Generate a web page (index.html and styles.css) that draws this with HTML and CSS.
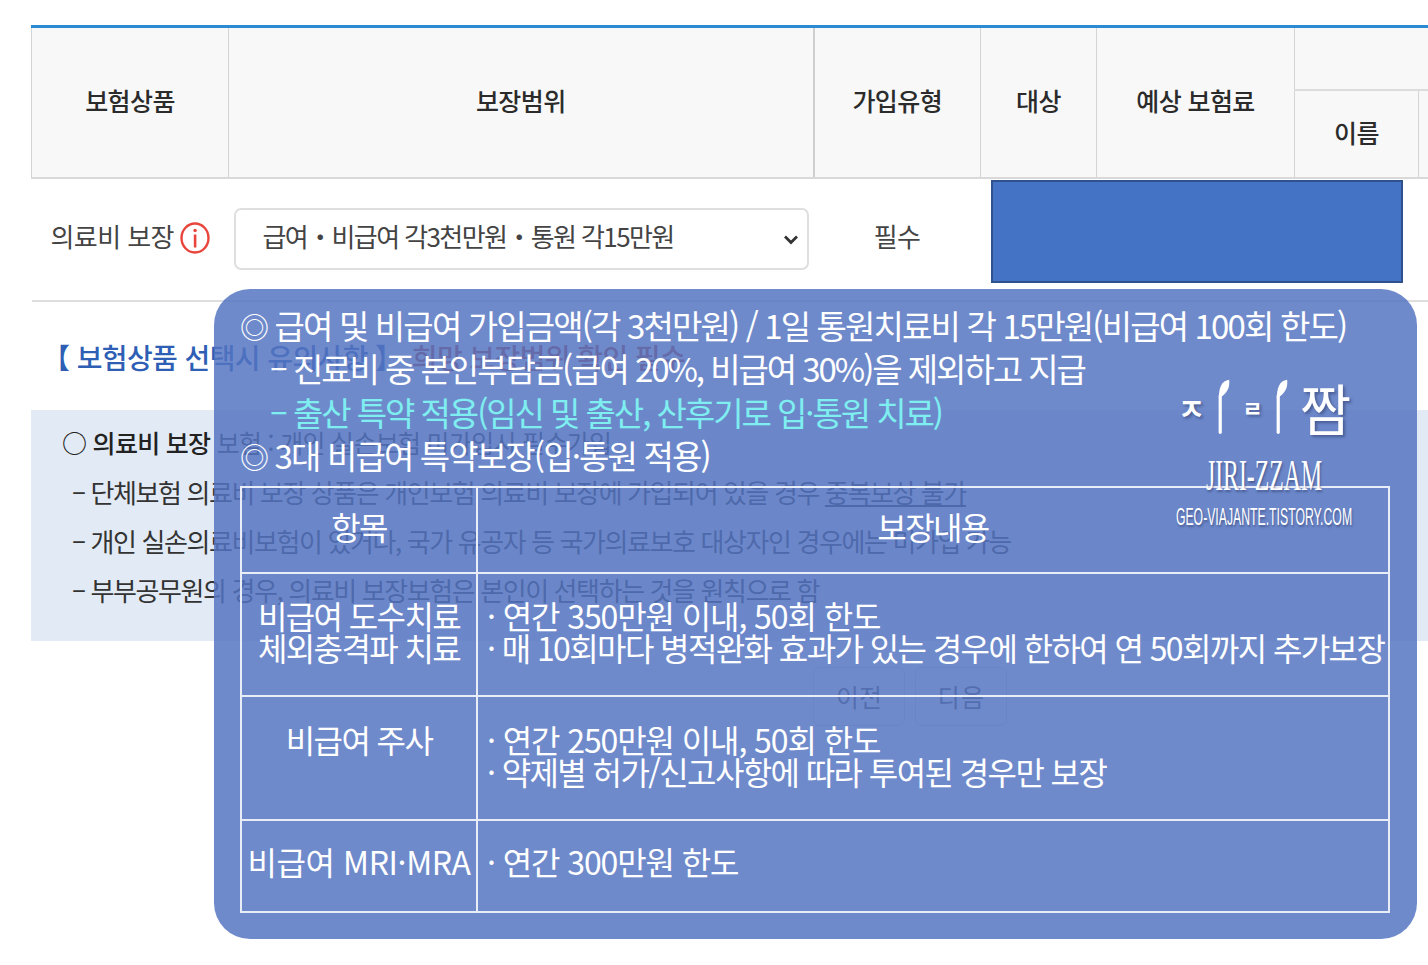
FILE: index.html
```html
<!DOCTYPE html>
<html lang="ko">
<head>
<meta charset="utf-8">
<title>의료비 보장</title>
<link rel="stylesheet" href="styles.css">
</head>
<body>
<main class="page">
  <table class="plan">
    <colgroup>
      <col class="c1"><col class="c2"><col class="c3"><col class="c4"><col class="c5"><col class="c6"><col class="c7">
    </colgroup>
    <thead>
      <tr class="head-top">
        <th rowspan="2">보험상품</th>
        <th rowspan="2" class="thick">보장범위</th>
        <th rowspan="2">가입유형</th>
        <th rowspan="2">대상</th>
        <th rowspan="2">예상 보험료</th>
        <th colspan="2"></th>
      </tr>
      <tr class="head-sub">
        <th>이름</th>
        <th></th>
      </tr>
    </thead>
    <tbody>
      <tr class="row">
        <td class="name">의료비 보장 <svg class="info" viewBox="0 0 30 32" aria-hidden="true"><ellipse cx="15" cy="16" rx="13.5" ry="14.5" fill="none" stroke="#e8453c" stroke-width="2.4"/><rect x="13.8" y="12.5" width="2.6" height="13" fill="#e8453c"/><circle cx="15.1" cy="8.5" r="1.7" fill="#e8453c"/></svg></td>
        <td class="range">
          <div class="choice-wrap">
            <select class="choice"><option>급여・비급여 각3천만원・통원 각15만원</option></select>
            <svg class="chev" viewBox="0 0 16 11" aria-hidden="true"><path d="M2 2.5 8 8.5 14 2.5" fill="none" stroke="#333" stroke-width="2.8"/></svg>
          </div>
        </td>
        <td class="type">필수</td>
        <td colspan="4"><div class="hidden-field"></div></td>
      </tr>
    </tbody>
  </table>

  <section class="notice">
    <h2 class="notice-title"><span class="blue">【 보험상품 선택시 유의사항 】</span> <span class="red">희망 보장범위 확인 필수</span></h2>
    <div class="notice-box">
      <p class="lead"><b>○ 의료비 보장</b> 보험 : 개인 실손보험 미가입시 필수가입</p>
      <p>– 단체보험 의료비 보장 상품은 개인보험 의료비 보장에 가입되어 있을 경우 <u>중복보상 불가</u></p>
      <p>– 개인 실손의료비보험이 있거나, 국가 유공자 등 국가의료보호 대상자인 경우에는 미가입 가능</p>
      <p>– 부부공무원의 경우, 의료비 보장보험은 본인이 선택하는 것을 원칙으로 함</p>
    </div>
    <div class="pager">
      <button class="btn">이전</button>
      <button class="btn">다음</button>
    </div>
  </section>
</main>

<div class="redact"></div>

<aside class="overlay">
  <p class="ov-line"><span class="ring">◎</span> 급여 및 비급여 가입금액(각 3천만원) / 1일 통원치료비 각 15만원(비급여 100회 한도)</p>
  <p class="ov-line sub">– 진료비 중 본인부담금(급여 20%, 비급여 30%)을 제외하고 지급</p>
  <p class="ov-line sub cyan">– 출산 특약 적용(임신 및 출산, 산후기로 입·통원 치료)</p>
  <p class="ov-line"><span class="ring">◎</span> 3대 비급여 특약보장(입·통원 적용)</p>
  <table class="detail">
    <tr class="r1"><td class="item">항목</td><td class="center">보장내용</td></tr>
    <tr class="r2"><td class="item">비급여 도수치료<br>체외충격파 치료</td><td><span class="loose">· 연간 350만원 이내, 50회 한도</span><br>· 매 10회마다 병적완화 효과가 있는 경우에 한하여 연 50회까지 추가보장</td></tr>
    <tr class="r3"><td class="item">비급여 주사</td><td><span class="loose">· 연간 250만원 이내, 50회 한도</span><br>· 약제별 허가/신고사항에 따라 투여된 경우만 보장</td></tr>
    <tr class="r4"><td class="item mid wide">비급여 MRI·MRA</td><td class="mid"><span class="loose">· 연간 300만원 한도</span></td></tr>
  </table>
  <div class="logo">
    <div class="logo-mark">
      <span class="jamo small">ㅈ</span>
      <svg class="stalk" viewBox="0 0 16 60" aria-hidden="true"><path d="M3 20C3 10 6 2 14 1C15 9 12 15 5.5 19Z" fill="#fff"/><path d="M4.5 57V18" stroke="#fff" stroke-width="3.4" stroke-linecap="round"/></svg>
      <span class="jamo tiny">ㄹ</span>
      <svg class="stalk" viewBox="0 0 16 60" aria-hidden="true"><path d="M3 20C3 10 6 2 14 1C15 9 12 15 5.5 19Z" fill="#fff"/><path d="M4.5 57V18" stroke="#fff" stroke-width="3.4" stroke-linecap="round"/></svg>
      <span class="jamo big">짬</span>
    </div>
    <div class="logo-name">JIRI-ZZAM</div>
    <div class="logo-url">GEO-VIAJANTE.TISTORY.COM</div>
  </div>
</aside>
</body>
</html>
```

FILE: styles.css
```css
* { box-sizing: border-box; }
html, body { margin: 0; height: 965px; overflow: hidden; background: #fff; }
body {
  position: relative;
  width: 1428px;
  font-family: "Noto Sans CJK KR", "Noto Sans", sans-serif;
  color: #333;
}
.page { padding: 25px 0 0 31px; width: 1428px; overflow: hidden; }

.plan {
  table-layout: fixed;
  width: 1450px;
  border-collapse: collapse;
  border-top: 3px solid #2b8ad0;
}
.c1 { width: 197px; } .c2 { width: 585px; } .c3 { width: 167px; } .c4 { width: 116px; }
.c5 { width: 198px; } .c6 { width: 124px; } .c7 { width: 63px; }
.plan th {
  background: #f8f8f8;
  border: 1px solid #d4d4d4;
  border-top: 0;
  border-bottom: 2px solid #d9d9d9;
  font-size: 25px;
  font-weight: 500;
  color: #2b2b2b;
  letter-spacing: -0.6px;
  padding: 0;
}
.plan th.thick { border-right: 2px solid #cfcfcf; }
.head-top { height: 63px; }
.head-top th[colspan] { border-bottom: 2px solid #dcdcdc; border-right: 0; }
.head-top th[rowspan] { padding-bottom: 5px; }
.head-sub { height: 88px; }
.head-sub th { padding-bottom: 3px; }
.row { height: 123px; }
.plan td { border-bottom: 2px solid #dedede; padding: 0; font-size: 26px; color: #444; letter-spacing: -0.6px; }
.name { padding: 0 0 7px 19px !important; white-space: nowrap; }
.info { width: 30px; height: 32px; vertical-align: -7px; }
.range { padding-left: 5px !important; }
.type { text-align: center; padding-bottom: 8px !important; }
.choice-wrap { position: relative; width: 575px; }
.choice {
  appearance: none;
  width: 575px;
  height: 62px;
  display: block;
  border: 2px solid #dfdfdf;
  border-radius: 7px;
  background: #fff;
  padding: 0 0 8px 27px;
  font: 26px "Noto Sans CJK KR", sans-serif;
  letter-spacing: -1.6px;
  color: #444;
}
.chev {
  position: absolute;
  right: 10px;
  top: 26px;
  width: 16px;
  height: 11px;
  pointer-events: none;
}
.hidden-field {
  width: 400px;
  height: 34px;
  margin-left: 12px;
  border: 1px solid #ececec;
  border-radius: 7px;
}

.notice-title {
  margin: 0;
  height: 108px;
  padding: 33px 0 0 11px;
  font-size: 28px;
  line-height: 44px;
  font-weight: 500;
  letter-spacing: -0.6px;
}
.blue { color: #2f5fb5; }
.red { color: #c0392b; margin-left: 2px; }
.notice-box {
  background: #e2ebf5;
  height: 231px;
  padding: 8px 0 0 31px;
}
.notice-box p {
  margin: 0;
  height: 49px;
  font-size: 26px;
  line-height: 49px;
  letter-spacing: -1.4px;
  color: #333;
  padding-left: 10px;
}
.notice-box .lead { padding-left: 0; font-size: 25px; letter-spacing: -0.7px; }
.notice-box b { font-weight: 500; color: #222; }
.pager {
  display: flex;
  gap: 10px;
  padding: 26px 0 0 782px;
}
.btn {
  width: 92px;
  height: 59px;
  background: #fff;
  border: 1px solid #dcdcdc;
  border-radius: 7px;
  font: 25px "Noto Sans CJK KR", sans-serif;
  color: #555;
}

.redact {
  position: absolute;
  left: 991px;
  top: 180px;
  width: 412px;
  height: 103px;
  background: #4472c4;
  border: 2px solid #2f528f;
}

.overlay {
  position: absolute;
  left: 214px;
  top: 289px;
  width: 1203px;
  height: 650px;
  padding: 15px 0 0 26px;
  border-radius: 36px;
  background: rgba(84, 115, 193, 0.84);
  color: #fff;
}
.ov-line {
  margin: 0;
  height: 43.4px;
  font-size: 33px;
  line-height: 43.4px;
  letter-spacing: -1.85px;
  white-space: nowrap;
}
.ring { font-size: 29px; }
.sub { padding-left: 30px; letter-spacing: -2.05px; }
.cyan { color: #7eeef0; }
.detail {
  position: relative;
  margin: 8px 0 0 0;
  width: 1150px;
  table-layout: fixed;
  border-collapse: collapse;
  font-size: 32px;
  line-height: 32px;
  letter-spacing: -1.6px;
}
.detail td {
  border: 2px solid #e8edf8;
  padding: 5px 0 0 9px;
  vertical-align: top;
  white-space: nowrap;
}
.detail td.item { width: 236px; text-align: center; padding-left: 0; }
.detail td.center { text-align: center; padding-left: 0; }
.detail td.mid { vertical-align: middle; padding-top: 0; padding-bottom: 10px; }
.detail td.wide { letter-spacing: -0.4px; }
.loose { letter-spacing: -1.1px; }
.r1 { height: 86px; }
.r1 td { padding-top: 22px !important; }
.r2 { height: 123px; }
.r2 td { padding-top: 25px !important; }
.r3 { height: 124px; }
.r3 td { padding-top: 26px !important; }
.r4 { height: 92px; }

.logo {
  position: absolute;
  left: 955px;
  top: 87px;
  width: 190px;
  text-align: center;
  text-shadow: 2px 2px 3px rgba(30, 40, 80, .45);
}
.logo-mark { display: flex; align-items: center; justify-content: center; gap: 11px; height: 62px; }
.jamo { line-height: 1; }
.small { font-size: 30px; font-weight: 700; }
.tiny { font-size: 22px; font-weight: 700; }
.big { font-size: 56px; font-weight: 400; letter-spacing: -1px; }
.stalk { width: 15px; height: 60px; }
.logo-name {
  margin-top: 18px;
  font-family: "Liberation Serif", serif;
  font-size: 44px;
  line-height: 40px;
  white-space: nowrap;
  transform: scaleX(.54);
  margin-left: -60px;
  margin-right: -60px;
}
.logo-url {
  margin-top: 7px;
  font-family: "Liberation Sans", sans-serif;
  font-size: 24px;
  line-height: 28px;
  white-space: nowrap;
  transform: scaleX(.51);
  margin-left: -90px;
  margin-right: -90px;
}
```
